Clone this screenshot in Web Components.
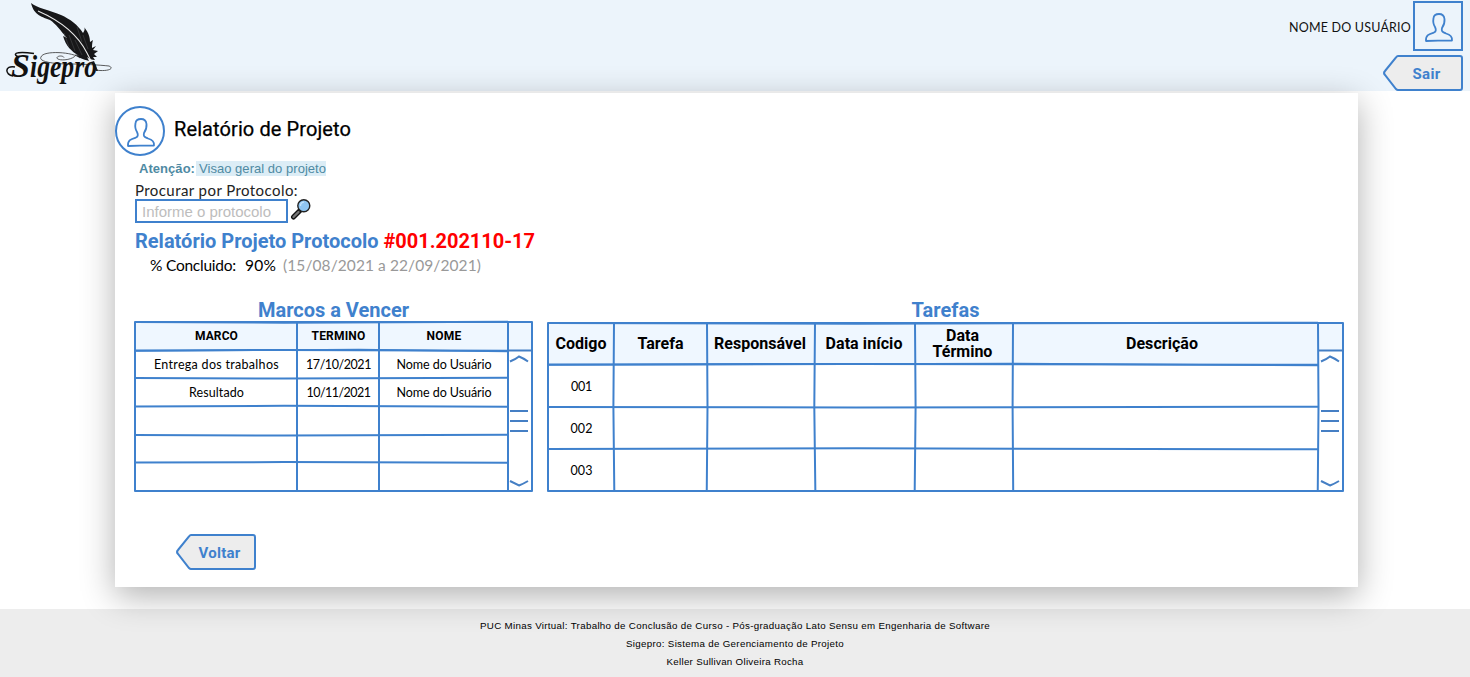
<!DOCTYPE html>
<html lang="pt-BR">
<head>
<meta charset="utf-8">
<title>Sigepro - Relatório de Projeto</title>
<style>
  html, body { margin: 0; height: 677px; overflow: hidden; background: #fff; }
  body { font-family: Roboto, "Liberation Sans", sans-serif; color: #000; }
</style>
</head>
<body>
<sig-page></sig-page>
<script>
const HAND = 'Lato, "Open Sans", sans-serif';

function define(name, html, setup) {
  const tpl = document.createElement('template');
  tpl.innerHTML = html;
  customElements.define(name, class extends HTMLElement {
    connectedCallback() {
      if (this.shadowRoot) return;
      this.attachShadow({ mode: 'open' }).appendChild(tpl.content.cloneNode(true));
      if (setup) setup(this, this.shadowRoot);
    }
  });
}

/* One line of text whose tracking is adjusted so that it takes a given width. */
define('fit-text', `<style>
  :host { display: block; white-space: pre; width: max-content; }
  span { display: inline-block; }
</style><span><slot></slot></span>`, (host, root) => {
  const w = parseFloat(host.getAttribute('w'));
  const span = root.querySelector('span');
  const natural = span.getBoundingClientRect().width;
  const n = host.textContent.length;
  if (w && natural) {
    const ls = (w - natural) / n;
    span.style.letterSpacing = ls + 'px';
  }
});

define('sig-logo', `<style>
  :host { display: block; width: 120px; height: 91px; }
  svg { display: block; }
</style>
<svg width="120" height="91" viewBox="0 0 120 91">
  <g fill="none" stroke="#333" stroke-width=".8">
    <path d="M80 58C74 52 43 50 41 57C38 62 55 64 70 64C82 64 100 65 109 66C114 68 110 71 100 70.500C97 70.500 96 69.500 95 68"/>
    <path d="M76 55C72 61 56 61 57 57.500C58 55.500 63 55.500 64 57.500"/>
  </g>
  <path fill="#171719" d="M31 3C37 8 49 10 61 15C70 19 78 25 83 33C85 30 85 28 84 27C89 33 90 38 90 42L93 40C92 43 92 46 92 48L96 46L93 50L98 51L94 54L97 57L93 57L95 60C92 60 89 59 87 57L89 61C83 59 78 58 75 54L79 56C71 51 66 46 63 36L67 38C60 30 56 24 50 20C43 17 34 16 31 3Z"/>
  <path fill="none" stroke="#3f4043" stroke-width=".7" d="M64 33L69 47M69 35L75 51M75 40L82 55M77 27L82 42M83 35L88 49M46 14L53 19"/>
  <path fill="none" stroke="#e8e8e8" stroke-width="1.100" d="M38 11C54 18 76 31 87 53C90 59 93 64 95 69"/>
  <path fill="#222" d="M91 62L96 71L98 71L94 61Z"/>
  <path fill="none" stroke="#111" stroke-width="1.500" d="M15 67C4 65 5 75 13 76M18 57C10 52 22 52 34 53.500"/>
  <g fill="#111" font-family="'Liberation Serif',serif" font-style="italic" font-weight="bold">
    <text x="11" y="76.500" font-size="34">S<tspan x="30" font-size="31" textLength="67" lengthAdjust="spacingAndGlyphs">igepro</tspan></text>
  </g>
</svg>`);

define('user-avatar', `<style>
  :host { display: block; box-sizing: border-box; width: 50px; height: 50px; border: 2px solid #3f81cd; }
  :host([round]) { border-radius: 50%; }
  svg { display: block; }
</style>
<svg width="46" height="46" viewBox="0 0 46 46" fill="none" stroke="#3f81cd" stroke-width="1.800" stroke-linejoin="round">
  <path d="M11 38C10.500 32 14 31 19 29.500C21.500 28.500 21 26 20 24C18 21 18 18 18.500 15C19 11.500 21 11 24 11C27 11 29 12 29.500 16C30 20 29 22 27 25C26 29 28 29 31 30.500C35 31.500 37.500 33 37 37.500C30 38 22 37 11 38Z"/>
</svg>`);

define('back-button', `<style>
  :host { display: grid; width: 80px; height: 36px; }
  svg, span { grid-area: 1 / 1; }
  span { padding-left: 7px; font: bold 15px/38px Roboto, sans-serif; color: #3f81cd; display: flex; justify-content: center; z-index: 1; }
</style>
<svg width="80" height="36" viewBox="0 0 80 36"><path d="M15 1H77Q79 1 79 3V33Q79 35 77 35H15Q14 35 13 34L2 20Q0 18 2 16L13 2.500Q14 1 15 1Z" fill="#ededed" stroke="#3f81cd" stroke-width="2"/></svg>
<span><slot></slot></span>`);

define('scroll-rail', `<style>
  :host { display: block; }
  svg { display: block; }
</style>
<svg width="24" height="170" viewBox="0 0 24 170" fill="none" stroke="#457fc4" stroke-width="2">
  <path d="M0 28.500H25"/>
  <path d="M2 39.500Q8 37 11 34.500Q15 36 20 39.500M2 159Q8 162 11 163.500Q15 162 20 159" stroke-width="2"/>
  <path d="M2 89H20M2 99H20M2 109H20"/>
</svg>`);

/* Table with hand-drawn rules: cols and rows list the track sizes in pixels. */
define('sketch-table', `<style>
  :host { display: grid; box-sizing: border-box; }
  svg, .cells { grid-area: 1 / 1; }
  svg { display: block; overflow: visible; }
  .cells { display: grid; }
</style>
<svg fill="none" stroke="#3f81cd" stroke-width="2"></svg>
<div class="cells"><slot></slot></div>`, (host, root) => {
  const cols = host.getAttribute('cols').split(' ').map(Number);
  const rows = host.getAttribute('rows').split(' ').map(Number);
  const W = cols.reduce((a, b) => a + b), H = rows.reduce((a, b) => a + b);
  const bodyW = W - cols[cols.length - 1];
  const straight = host.hasAttribute('straight');
  const svg = root.querySelector('svg');
  svg.setAttribute('width', W);
  svg.setAttribute('height', H);
  let y = 0, x = 0, out = '';
  out += `<path fill="#eff7ff" stroke="none" d="M0 0H${bodyW}V${rows[0]}H0ZM${bodyW} 0H${W}V28H${bodyW}Z"/>`;
  const wob = [.7, -.6, .5, -.7, .6, -.4, .5];
  rows.forEach((r, i) => {
    const a = wob[i];
    out += `<path d="M0 ${y}L${bodyW * .4} ${y + a}L${bodyW} ${y - a / 2}"/>`;
    if (i === 1) out += `<path stroke-width="1.6" d="M0 ${y + .5}L${bodyW * .6} ${y - .9}L${bodyW} ${y + 1}"/>`;
    y += r;
  });
  cols.forEach((c, i) => {
    const a = i && !straight ? wob[i % 7] : 0;
    out += `<path d="M${x} 0L${x + a} ${H * .5}L${x - a / 2} ${H}"/>`;
    x += c;
  });
  out += `<path d="M0 0H${W}V${H}H0Z" stroke-linejoin="round"/>`;
  svg.innerHTML = out;
  const cells = root.querySelector('.cells');
  cells.style.gridTemplateColumns = cols.map(c => c + 'px').join(' ');
  cells.style.gridTemplateRows = rows.map(r => r + 'px').join(' ');
});

define('t-cell', `<style>
  :host { display: flex; flex-direction: column; align-items: center; justify-content: center; text-align: center; font: 12.500px/16px ${HAND}; padding: 2px 0 0 1px; }
  :host([head]) { font: bold 12px/16px Roboto, sans-serif; padding: 1px 0 2px 1px; }
  :host([big]) { font-size: 16px; padding: 0; }
</style><slot></slot>`);

define('sig-header', `<style>
  :host { display: flex; justify-content: space-between; height: 91px; background: #ecf4fb; box-sizing: border-box; padding-right: 7px; }
  .user { display: flex; flex-direction: column; align-items: flex-end; padding-top: 1px; gap: 4px; }
  .who { display: flex; gap: 2px; }
  .who fit-text { font: 12.500px/53px ${HAND}; color: #111; height: 50px; }
</style>
<sig-logo></sig-logo>
<div class="user">
  <div class="who"><fit-text w="122">NOME DO USUÁRIO</fit-text><user-avatar></user-avatar></div>
  <back-button><fit-text w="28">Sair</fit-text></back-button>
</div>`);

define('search-field', `<style>
  :host { display: flex; gap: 2px; height: 24px; }
  .box { box-sizing: border-box; width: 153px; height: 24px; border: 2px solid #3f81cd; padding-left: 5px; font: 15px/22px "Liberation Sans", sans-serif; color: #bdbdbd; }
  svg { display: block; }
</style>
<div class="box"><fit-text w="129">Informe o protocolo</fit-text></div>
<svg width="22" height="22" viewBox="0 0 22 22">
  <path d="M3.500 18L10 11.500" stroke="#111" stroke-width="5" stroke-linecap="round"/>
  <path d="M3.500 18L8.500 13" stroke="#777" stroke-width="2.400" stroke-linecap="round"/>
  <circle cx="13.800" cy="6.700" r="6" fill="#8fc5f1" stroke="#222" stroke-width="1.400"/>
  <path d="M10.500 7Q10.500 3.500 14 3.200" stroke="#c5e3fb" stroke-width="1.300" fill="none"/>
</svg>`);

define('report-card', `<style>
  :host { display: block; box-sizing: border-box; width: 1243px; height: 494px; margin: 2px 0 0 115px; background: #fff; box-shadow: 0 9px 32px rgba(0,0,0,.31); padding-top: 13px; }
  .title { display: flex; gap: 9px; height: 50px; }
  .title fit-text { font: 20px/46px Roboto, sans-serif; -webkit-text-stroke: .25px #000; }
  .note { display: flex; align-items: center; height: 15px; margin: 5px 0 0 24px; font: 13px/15px "Liberation Sans", sans-serif; color: #4f8aa3; }
  .note b { width: 57px; }
  .note .hl { background: #dcedf6; height: 15px; padding: 0 0 0 3px; width: 127px; }
  .label { font: 15px/18px ${HAND}; margin: 5px 0 0 20px; height: 18px; color: #222; }
  search-field { margin: 0 0 0 20px; }
  h2 { display: flex; gap: 5px; margin: 6px 0 0 20px; font: bold 20px/24px Roboto, sans-serif; color: #3f81cd; }
  .red { color: #ff0000; }
  .done { display: flex; font: 15.500px/24px ${HAND}; margin: 0 0 0 35px; height: 25px; }
  .done .pct { margin-left: 9px; }
  .done .per { margin-left: 7px; color: #999; }
  .tables { display: flex; gap: 16px; margin: 20px 0 0 20px; height: 193px; }
  .tables h3 { margin: 0; height: 24px; font: bold 20px/24px Roboto, sans-serif; color: #3f81cd; display: flex; justify-content: center; }
  .t2 sketch-table { margin-top: 1px; }
  scroll-rail { grid-row: 1 / -1; grid-column: -2; }
  .t2 scroll-rail { margin: -1px 0 0 1px; }
  back-button { margin: 43px 0 0 61px; }
</style>
<div class="title"><user-avatar round></user-avatar><fit-text w="177">Relatório de Projeto</fit-text></div>
<div class="note"><b><fit-text w="56">Atenção:</fit-text></b><span class="hl"><fit-text w="127">Visao geral do projeto</fit-text></span></div>
<div class="label"><fit-text w="163">Procurar por Protocolo:</fit-text></div>
<search-field></search-field>
<h2><fit-text w="243.500">Relatório Projeto Protocolo</fit-text><fit-text class="red" w="151.500">#001.202110-17</fit-text></h2>
<div class="done"><fit-text w="86">% Concluido:</fit-text><fit-text class="pct" w="31">90%</fit-text><fit-text class="per" w="198">(15/08/2021 a 22/09/2021)</fit-text></div>
<div class="tables">
  <div>
    <h3><fit-text w="151">Marcos a Vencer</fit-text></h3>
    <sketch-table straight cols="162 82 129 24" rows="28.500 27.500 28.500 28.500 27.500 28.500">
      <t-cell head><fit-text w="43">MARCO</fit-text></t-cell><t-cell head><fit-text w="54">TERMINO</fit-text></t-cell><t-cell head><fit-text w="35">NOME</fit-text></t-cell><scroll-rail></scroll-rail>
      <t-cell><fit-text w="125">Entrega dos trabalhos</fit-text></t-cell><t-cell><fit-text w="65">17/10/2021</fit-text></t-cell><t-cell><fit-text w="95">Nome do Usuário</fit-text></t-cell>
      <t-cell><fit-text w="55">Resultado</fit-text></t-cell><t-cell><fit-text w="64">10/11/2021</fit-text></t-cell><t-cell><fit-text w="95">Nome do Usuário</fit-text></t-cell>
    </sketch-table>
  </div>
  <div class="t2">
    <h3><fit-text w="68">Tarefas</fit-text></h3>
    <sketch-table cols="66 93 108 100 98 305 25" rows="41.500 42.500 42 42">
      <t-cell head big><fit-text w="51">Codigo</fit-text></t-cell><t-cell head big><fit-text w="46">Tarefa</fit-text></t-cell><t-cell head big style="padding-right:2px"><fit-text w="92">Responsável</fit-text></t-cell><t-cell head big style="padding-right:2px"><fit-text w="77">Data início</fit-text></t-cell><t-cell head big style="padding:0 18px 0 15px">Data Término</t-cell><t-cell head big style="padding-right:7px"><fit-text w="72">Descrição</fit-text></t-cell><scroll-rail></scroll-rail>
      <t-cell style="grid-column:1"><fit-text w="21">001</fit-text></t-cell>
      <t-cell style="grid-column:1"><fit-text w="22">002</fit-text></t-cell>
      <t-cell style="grid-column:1"><fit-text w="22">003</fit-text></t-cell>
    </sketch-table>
  </div>
</div>
<back-button><fit-text w="42">Voltar</fit-text></back-button>`);

define('sig-footer', `<style>
  :host { display: flex; flex-direction: column; align-items: center; box-sizing: border-box; height: 68px; margin-top: 22px; padding-top: 8px; background: #ededed; font: 9.750px/18px "Liberation Sans", sans-serif; color: #000; }
</style>
<fit-text w="510">PUC Minas Virtual: Trabalho de Conclusão de Curso - Pós-graduação Lato Sensu em Engenharia de Software</fit-text>
<fit-text w="218">Sigepro: Sistema de Gerenciamento de Projeto</fit-text>
<fit-text w="137">Keller Sullivan Oliveira Rocha</fit-text>`);

define('sig-page', `<style>
  :host { display: flex; flex-direction: column; width: 1470px; height: 677px; }
  report-card { position: relative; flex: none; }
</style>
<sig-header></sig-header>
<report-card></report-card>
<sig-footer></sig-footer>`);
</script>
</body>
</html>
